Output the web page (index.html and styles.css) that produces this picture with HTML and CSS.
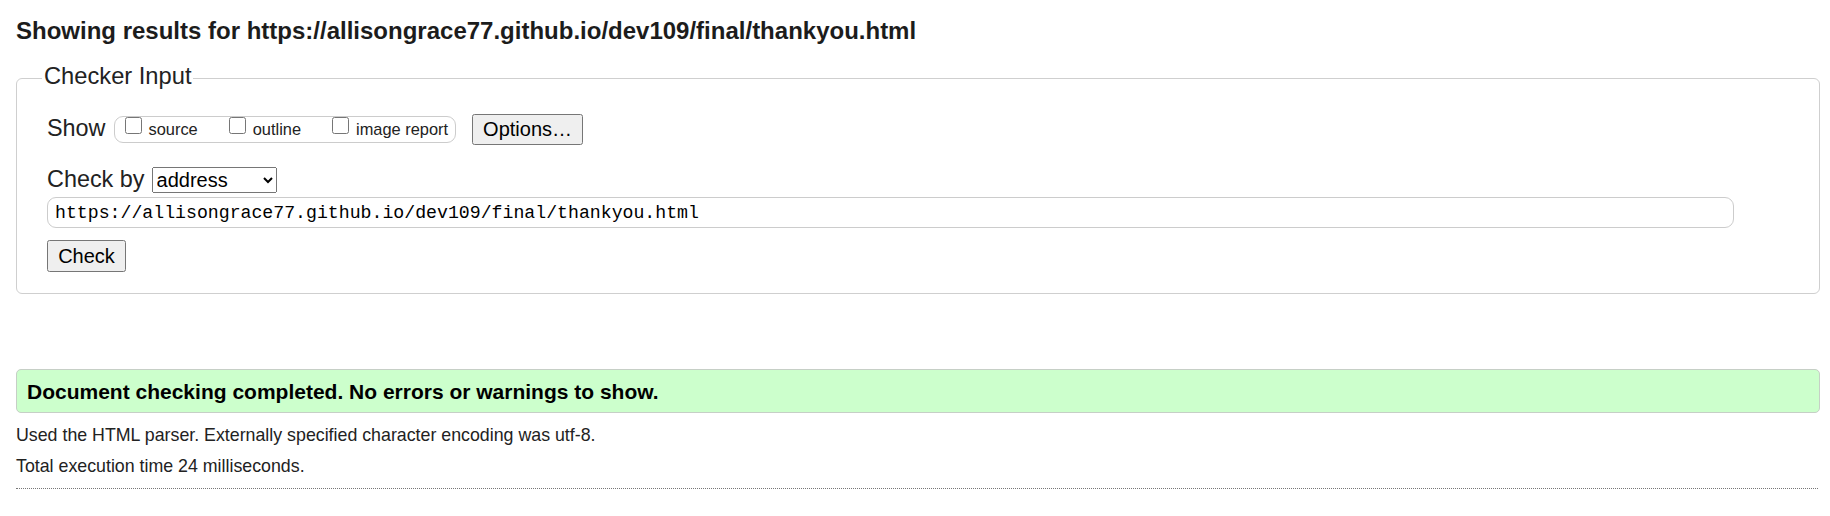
FILE: index.html
```html
<!DOCTYPE html>
<html lang="en">
<head>
<meta charset="utf-8">
<title>Showing results for https://allisongrace77.github.io/dev109/final/thankyou.html - Nu Html Checker</title>
<link rel="stylesheet" href="styles.css">
</head>
<body>
<div class="page">
  <h1 class="title">Showing results for https://allisongrace77.github.io/dev109/final/thankyou.html</h1>
  <form class="checker">
    <fieldset class="input-box">
      <legend class="legend">Checker Input</legend>
      <div class="row show-row">
        <span class="label">Show</span>
        <div class="pill">
          <label class="opt"><input type="checkbox" class="cb"><span class="opt-text">source</span></label>
          <label class="opt"><input type="checkbox" class="cb"><span class="opt-text">outline</span></label>
          <label class="opt"><input type="checkbox" class="cb"><span class="opt-text">image report</span></label>
        </div>
        <button type="button" class="btn btn-options">Options…</button>
      </div>
      <div class="row by-row">
        <span class="label label-by">Check by</span>
        <select class="select">
          <option>address</option>
          <option>file upload</option>
          <option>text input</option>
        </select>
      </div>
      <div class="url-row">
        <input class="url" type="url" value="https://allisongrace77.github.io/dev109/final/thankyou.html">
      </div>
      <div class="check-row">
        <button type="button" class="btn btn-check">Check</button>
      </div>
    </fieldset>
  </form>
  <p class="success">Document checking completed. No errors or warnings to show.</p>
  <p class="details first">Used the HTML parser. Externally specified character encoding was utf-8.</p>
  <p class="details">Total execution time 24 milliseconds.</p>
  <hr class="rule">
</div>
</body>
</html>
```
FILE: styles.css
```css
html, body {
  margin: 0;
  padding: 0;
  background: #fff;
}
body {
  font-family: "Liberation Sans", Arial, sans-serif;
  color: #222;
}
.page {
  padding: 0 10px 0 16px;
}
.title {
  margin: 17px 0 0;
  font-size: 24px;
  line-height: 28px;
  font-weight: bold;
  color: #1c1c1c;
}
.checker {
  margin: 0;
}
.input-box {
  margin: 18px 0 0;
  padding: 20px 30px 21px 30px;
  border: 1px solid #cfcfcf;
  border-radius: 6px;
  min-width: 0;
}
.legend {
  margin-left: -5px;
  padding: 0 2px 4px;
  font-size: 23.7px;
  line-height: 27px;
  color: #222;
}
.row {
  display: flex;
}
.show-row {
  align-items: center;
  height: 31px;
}
.label {
  font-size: 23.4px;
  line-height: 27px;
  color: #222;
}
.show-row .label {
  margin-bottom: 3px;
}
.pill {
  display: flex;
  align-items: flex-start;
  gap: 31px;
  box-sizing: border-box;
  height: 27px;
  margin-left: 8px;
  padding: 0 7px 0 10px;
  border: 1px solid #cccccc;
  border-radius: 9px;
}
.opt {
  display: flex;
  align-items: flex-start;
  gap: 7px;
}
.cb {
  width: 17px;
  height: 17px;
  margin: 0;
}
.opt-text {
  margin-top: 2px;
  font-size: 16.4px;
  line-height: 20px;
  color: #222;
}
.btn {
  box-sizing: border-box;
  font-family: "Liberation Sans", Arial, sans-serif;
  font-size: 20px;
  color: #000;
  padding: 0;
  margin: 0;
}
.btn-options {
  margin-left: 16px;
  width: 111px;
  height: 31px;
}
.by-row {
  align-items: baseline;
  margin-top: 22px;
}
.label-by {
  line-height: 20px;
}
.select {
  box-sizing: border-box;
  margin-left: 7px;
  width: 125px;
  height: 26px;
  font-family: "Liberation Sans", Arial, sans-serif;
  font-size: 20px;
  color: #000;
}
.url-row {
  margin-top: 4px;
}
.url {
  box-sizing: border-box;
  display: block;
  margin: 0;
  width: calc(100% - 55px);
  height: 31px;
  padding: 0 7px;
  border: 1px solid #cccccc;
  border-radius: 9px;
  font-family: "Liberation Mono", "DejaVu Sans Mono", monospace;
  font-size: 18.2px;
  color: #000;
  outline: none;
}
.check-row {
  margin-top: 12px;
}
.btn-check {
  width: 79px;
  height: 32px;
}
.success {
  margin: 75px 0 0;
  padding: 10px 10px 8px;
  background: #ccffcc;
  border: 1px solid #c6cfc6;
  border-radius: 5px;
  font-size: 21px;
  line-height: 24px;
  font-weight: bold;
  color: #000;
}
.details {
  margin: 11px 0 0;
  font-size: 17.8px;
  line-height: 20px;
  color: #222;
}
.details.first {
  margin-top: 12px;
}
.rule {
  margin: 12px 2px 0 0;
  height: 0;
  border: 0;
  border-top: 1px dotted #777;
}
```
